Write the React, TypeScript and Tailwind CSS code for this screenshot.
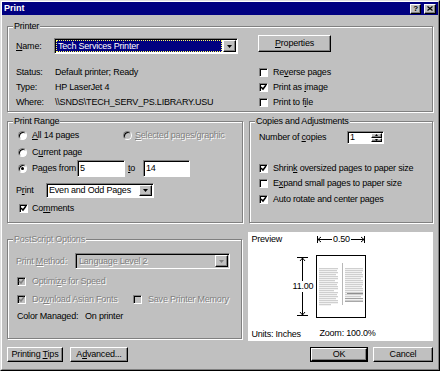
import React from "react";

const raised =
  "border border-t-white border-l-white border-r-black border-b-black shadow-[inset_-1px_-1px_0_#808080]";
const sunken =
  "border border-t-[#808080] border-l-[#808080] border-r-white border-b-white shadow-[inset_1px_1px_0_#000]";
const dis = "text-[#808080] [text-shadow:1px_1px_0_#fff]";

function Arrow({ disabled }: { disabled?: boolean }) {
  return (
    <svg width="5" height="3" viewBox="0 0 5 3">
      <path d="M0 0H5L2.5 3Z" fill={disabled ? "#808080" : "#000"} />
    </svg>
  );
}

function DropBtn({ disabled }: { disabled?: boolean }) {
  return (
    <div className={`w-[13px] h-full shrink-0 flex items-center justify-center bg-[#c0c0c0] ${raised}`}>
      <Arrow disabled={disabled} />
    </div>
  );
}

function Check({ checked, disabled }: { checked?: boolean; disabled?: boolean }) {
  return (
    <span
      className={`inline-flex w-[9px] h-[9px] shrink-0 ${sunken} ${disabled ? "bg-[#c0c0c0]" : "bg-white"}`}
    >
      {checked && (
        <svg width="7" height="7" viewBox="0 0 7 7">
          <path d="M1 3 L3 5 L6 1" stroke={disabled ? "#808080" : "#000"} strokeWidth="1.5" fill="none" />
        </svg>
      )}
    </span>
  );
}

function Radio({ checked, disabled }: { checked?: boolean; disabled?: boolean }) {
  return (
    <span
      className={`inline-flex items-center justify-center w-[9px] h-[9px] shrink-0 rounded-full ${sunken} ${
        disabled ? "bg-[#c0c0c0]" : "bg-white"
      }`}
    >
      {checked && <span className="w-[3px] h-[3px] rounded-full bg-black" />}
    </span>
  );
}

function Group({
  label,
  className,
  children,
  disabled,
}: {
  label: string;
  className?: string;
  children?: React.ReactNode;
  disabled?: boolean;
}) {
  return (
    <div className={`relative border border-[#808080] shadow-[1px_1px_0_#fff,inset_1px_1px_0_#fff] ${className ?? ""}`}>
      <span className={`absolute -top-[6px] left-[5px] px-[1px] bg-[#c0c0c0] leading-[10px] ${disabled ? dis : ""}`}>
        {label}
      </span>
      {children}
    </div>
  );
}

function Btn({ children, className }: { children: React.ReactNode; className?: string }) {
  return (
    <div className={`flex items-center justify-center bg-[#c0c0c0] ${raised} ${className ?? ""}`}>{children}</div>
  );
}

function PageThumb() {
  const left = Array.from({ length: 19 }, (_, i) => 13 + i * 2);
  const right = Array.from({ length: 17 }, (_, i) => 13 + i * 2);
  const lw = [19, 18, 19, 17, 19, 19, 16, 19, 18, 19, 19, 15, 19, 18, 19, 17, 19, 19, 12];
  const rw = [18, 18, 17, 18, 18, 16, 18, 18, 18, 17, 18, 18, 18, 18, 16, 18, 18];
  return (
    <svg width="50" height="63" viewBox="0 0 50 63">
      <rect x="0.5" y="0.5" width="49" height="62" fill="white" stroke="black" />
      {left.map((y, i) => (
        <rect key={"l" + i} x="3" y={y} width={lw[i]} height="1.3" fill="#cfcfcf" />
      ))}
      <rect x="26" y="8" width="1" height="42" fill="#b8b8b8" />
      {right.map((y, i) => (
        <rect key={"r" + i} x="29" y={y} width={rw[i]} height="1.3" fill="#cfcfcf" />
      ))}
      <rect x="31" y="38" width="16" height="1" fill="#8f8f8f" />
      <rect x="29" y="43" width="18" height="1" fill="#a0a0a0" />
      <rect x="29" y="46" width="18" height="1" fill="#a8a8a8" />
    </svg>
  );
}

export default function App() {
  return (
    <div className="w-[440px] h-[371px] bg-[#c0c0c0] text-black text-[9px] leading-none tracking-[-0.2px] font-['Liberation_Sans',Arial,sans-serif] border border-t-[#dfdfdf] border-l-[#dfdfdf] border-r-black border-b-black">
      <div className="h-full flex flex-col border border-t-white border-l-white border-r-[#808080] border-b-[#808080]">
        {/* Title bar */}
        <div className="h-[13px] shrink-0 bg-[#000080] flex items-center justify-between pl-[2px] pr-[2px]">
          <span className="text-white font-bold text-[9px] tracking-normal">Print</span>
          <div className="flex gap-[3px]">
            <div className={`w-[11px] h-[10px] flex items-center justify-center ${raised} bg-[#c0c0c0]`}>
              <span className="font-bold text-[8px] leading-none">?</span>
            </div>
            <div className={`w-[12px] h-[10px] flex items-center justify-center ${raised} bg-[#c0c0c0]`}>
              <svg width="6" height="5" viewBox="0 0 6 5">
                <path d="M0.5 0.5 L5.5 4.5 M5.5 0.5 L0.5 4.5" stroke="#000" strokeWidth="1.2" />
              </svg>
            </div>
          </div>
        </div>

        <div className="flex-1 flex flex-col px-[5px]">
          {/* Printer */}
          <Group label="Printer" className="mt-[11px] h-[86px] shrink-0">
            <div className="flex pl-[8px]">
              <div className="flex flex-col pt-[11px]">
                <div className="flex items-center h-[16px]">
                  <span className="w-[38px]">
                    <u>N</u>ame:
                  </span>
                  <div className={`w-[184px] h-[16px] bg-white p-[1px] flex ${sunken}`}>
                    <div className="flex-1 mr-[1px] bg-[#000080] border border-dotted border-[#ffff60] text-white flex items-center pl-[1px]">
                      Tech Services Printer
                    </div>
                    <DropBtn />
                  </div>
                </div>
                <div className="mt-[11px] flex items-center h-[15px]">
                  <span className="w-[39px]">Status:</span>Default printer; Ready
                </div>
                <div className="flex items-center h-[15px]">
                  <span className="w-[39px]">Type:</span>HP LaserJet 4
                </div>
                <div className="flex items-center h-[15px]">
                  <span className="w-[39px]">Where:</span>\\SNDS\TECH_SERV_PS.LIBRARY.USU
                </div>
              </div>
              <div className="flex flex-col pt-[8px] ml-[20px]">
                <Btn className="w-[73px] h-[17px]">
                  <span>
                    <u>P</u>roperties
                  </span>
                </Btn>
                <div className="mt-[13px] flex items-center h-[15px] gap-[5px] pl-[1px]">
                  <Check />
                  <span>
                    Re<u>v</u>erse pages
                  </span>
                </div>
                <div className="flex items-center h-[15px] gap-[5px] pl-[1px]">
                  <Check checked />
                  <span>
                    Print as <u>i</u>mage
                  </span>
                </div>
                <div className="flex items-center h-[15px] gap-[5px] pl-[1px]">
                  <Check />
                  <span>
                    Print to f<u>i</u>le
                  </span>
                </div>
              </div>
            </div>
          </Group>

          {/* Row 2 */}
          <div className="mt-[9px] flex h-[102px] shrink-0">
            <Group label="Print Range" className="w-[236px] h-full">
              <div className="flex flex-col pl-[10px] pt-[6px]">
                <div className="flex items-center h-[14px]">
                  <div className="w-[105px] flex items-center gap-[5px]">
                    <Radio />
                    <span>
                      <u>A</u>ll 14 pages
                    </span>
                  </div>
                  <div className="flex items-center gap-[3px]">
                    <Radio disabled />
                    <span className={`whitespace-nowrap ${dis}`}>
                      <u>S</u>elected pages/graphic
                    </span>
                  </div>
                </div>
                <div className="mt-[3px] flex items-center h-[14px] gap-[5px]">
                  <Radio />
                  <span>
                    C<u>u</u>rrent page
                  </span>
                </div>
                <div className="mt-[1px] flex items-center h-[17px]">
                  <div className="w-[59px] flex items-center gap-[5px]">
                    <Radio checked />
                    <span>
                      Pa<u>g</u>es from
                    </span>
                  </div>
                  <div className={`w-[48px] h-[17px] bg-white flex items-center pl-[2px] ${sunken}`}>5</div>
                  <span className="ml-[3px] w-[15px]">
                    <u>t</u>o
                  </span>
                  <div className={`w-[47px] h-[17px] bg-white flex items-center pl-[2px] ${sunken}`}>14</div>
                </div>
                <div className="mt-[6px] -ml-[2px] flex items-center h-[15px]">
                  <span className="w-[30px]">
                    P<u>r</u>int
                  </span>
                  <div className={`w-[108px] h-[15px] bg-white p-[1px] flex ${sunken}`}>
                    <div className="flex-1 flex items-center pl-[1px]">Even and Odd Pages</div>
                    <DropBtn />
                  </div>
                </div>
                <div className="mt-[3px] ml-[1px] flex items-center h-[14px] gap-[4px]">
                  <Check checked />
                  <span>
                    Co<u>m</u>ments
                  </span>
                </div>
              </div>
            </Group>
            <Group label="Copies and Adjustments" className="ml-[6px] w-[184px] h-full">
              <div className="flex flex-col pl-[9px] pt-[9px]">
                <div className="flex items-center h-[13px]">
                  <span className="w-[88px]">
                    Number of <u>c</u>opies
                  </span>
                  <div className={`w-[37px] h-[13px] bg-white flex p-[1px] ${sunken}`}>
                    <div className="flex-1 flex items-center pl-[1px]">1</div>
                    <div className="w-[11px] h-full flex flex-col">
                      <div className={`flex-1 flex items-center justify-center bg-[#c0c0c0] ${raised}`}>
                        <svg width="3" height="2" viewBox="0 0 3 2">
                          <path d="M0 2H3L1.5 0Z" fill="#000" />
                        </svg>
                      </div>
                      <div className={`flex-1 flex items-center justify-center bg-[#c0c0c0] ${raised}`}>
                        <svg width="3" height="2" viewBox="0 0 3 2">
                          <path d="M0 0H3L1.5 2Z" fill="#000" />
                        </svg>
                      </div>
                    </div>
                  </div>
                </div>
                <div className="mt-[17px] flex items-center h-[14px] gap-[5px]">
                  <Check checked />
                  <span>
                    Shrin<u>k</u> oversized pages to paper size
                  </span>
                </div>
                <div className="mt-[1px] flex items-center h-[14px] gap-[5px]">
                  <Check />
                  <span>
                    E<u>x</u>pand small pages to paper size
                  </span>
                </div>
                <div className="mt-[2px] flex items-center h-[14px] gap-[5px]">
                  <Check checked />
                  <span>Auto rotate and center pages</span>
                </div>
              </div>
            </Group>
          </div>

          {/* Row 3 */}
          <div className="mt-[9px] flex h-[109px] shrink-0">
            <div className="w-[236px] pt-[7px]">
              <Group label="PostScript Options" disabled className="h-[100px]">
                <div className="flex flex-col pl-[8px] pt-[13px]">
                  <div className="flex items-center h-[16px]">
                    <span className={`w-[59px] ${dis}`}>
                      Print <u>M</u>ethod:
                    </span>
                    <div className={`w-[155px] h-[16px] bg-[#c0c0c0] p-[1px] flex ${sunken}`}>
                      <div className={`flex-1 flex items-center pl-[2px] ${dis}`}>Language Level 2</div>
                      <DropBtn disabled />
                    </div>
                  </div>
                  <div className="mt-[5px] ml-[1px] flex items-center h-[14px] gap-[6px]">
                    <Check checked disabled />
                    <span className={dis}>
                      Optimi<u>z</u>e for Speed
                    </span>
                  </div>
                  <div className="mt-[4px] ml-[1px] flex items-center h-[14px]">
                    <div className="w-[116px] flex items-center gap-[6px]">
                      <Check checked disabled />
                      <span className={`whitespace-nowrap ${dis}`}>
                        Do<u>w</u>nload Asian Fonts
                      </span>
                    </div>
                    <div className="flex items-center gap-[6px]">
                      <Check disabled />
                      <span className={`whitespace-nowrap ${dis}`}>Save Printer Memory</span>
                    </div>
                  </div>
                  <div className="mt-[3px] ml-[1px] flex items-center h-[14px]">
                    <span className="w-[68px]">Color Managed:</span>
                    <span>On printer</span>
                  </div>
                </div>
              </Group>
            </div>

            {/* Preview */}
            <div className="ml-[6px] w-[185px] h-[109px] bg-white flex">
              <div className="w-[68px] flex flex-col">
                <div className="pl-[3px] pt-[2px] h-[12px] leading-[10px]">Preview</div>
                <div className="mt-[13px] flex justify-end pr-[3px]">
                  <div className="w-[21px] h-[59px] flex flex-col items-center">
                    <svg width="11" height="7" viewBox="0 0 11 7" className="shrink-0">
                      <path d="M0 0.5H11 M5.5 0.5V7 M3 4 L5.5 1 L8 4" stroke="#000" strokeWidth="1" fill="none" />
                    </svg>
                    <div className="w-px flex-1 bg-black" />
                    <div className="bg-white leading-[11px] h-[11px]">11.00</div>
                    <div className="w-px flex-1 bg-black" />
                    <svg width="11" height="7" viewBox="0 0 11 7" className="shrink-0">
                      <path d="M0 6.5H11 M5.5 0V6.5 M3 3 L5.5 6 L8 3" stroke="#000" strokeWidth="1" fill="none" />
                    </svg>
                  </div>
                </div>
                <div className="mt-auto pl-[3px] pb-[2px] leading-[10px] whitespace-nowrap">Units: Inches</div>
              </div>
              <div className="w-[50px] flex flex-col">
                <div className="mt-[3px] ml-[1px] w-[48px] h-[9px] flex items-center">
                  <svg width="6" height="9" viewBox="0 0 6 9" className="shrink-0">
                    <path d="M0.5 1V8 M0.5 4.5H6 M4 2 L1 4.5 L4 7" stroke="#000" strokeWidth="1" fill="none" />
                  </svg>
                  <div className="flex-1 h-px bg-black" />
                  <span className="px-[1px] leading-[9px]">0.50</span>
                  <div className="flex-1 h-px bg-black" />
                  <svg width="6" height="9" viewBox="0 0 6 9" className="shrink-0">
                    <path d="M5.5 1V8 M0 4.5H5.5 M2 2 L5 4.5 L2 7" stroke="#000" strokeWidth="1" fill="none" />
                  </svg>
                </div>
                <div className="mt-[11px] h-[63px]">
                  <PageThumb />
                </div>
                <div className="mt-[10px] pl-[3px] leading-[10px] whitespace-nowrap">Zoom: 100.0%</div>
              </div>
            </div>
          </div>

          {/* Buttons */}
          <div className="mt-[6px] h-[15px] flex justify-between shrink-0">
            <div className="flex gap-[7px]">
              <Btn className="w-[56px] h-[15px]">
                <span>
                  Printing <u>T</u>ips
                </span>
              </Btn>
              <Btn className="w-[58px] h-[15px]">
                <span>
                  A<u>d</u>vanced...
                </span>
              </Btn>
            </div>
            <div className="flex gap-[5px]">
              <div className="w-[58px] h-[15px] border border-black flex">
                <Btn className="flex-1 h-full">OK</Btn>
              </div>
              <Btn className="w-[60px] h-[15px]">Cancel</Btn>
            </div>
          </div>
        </div>
      </div>
    </div>
  );
}
